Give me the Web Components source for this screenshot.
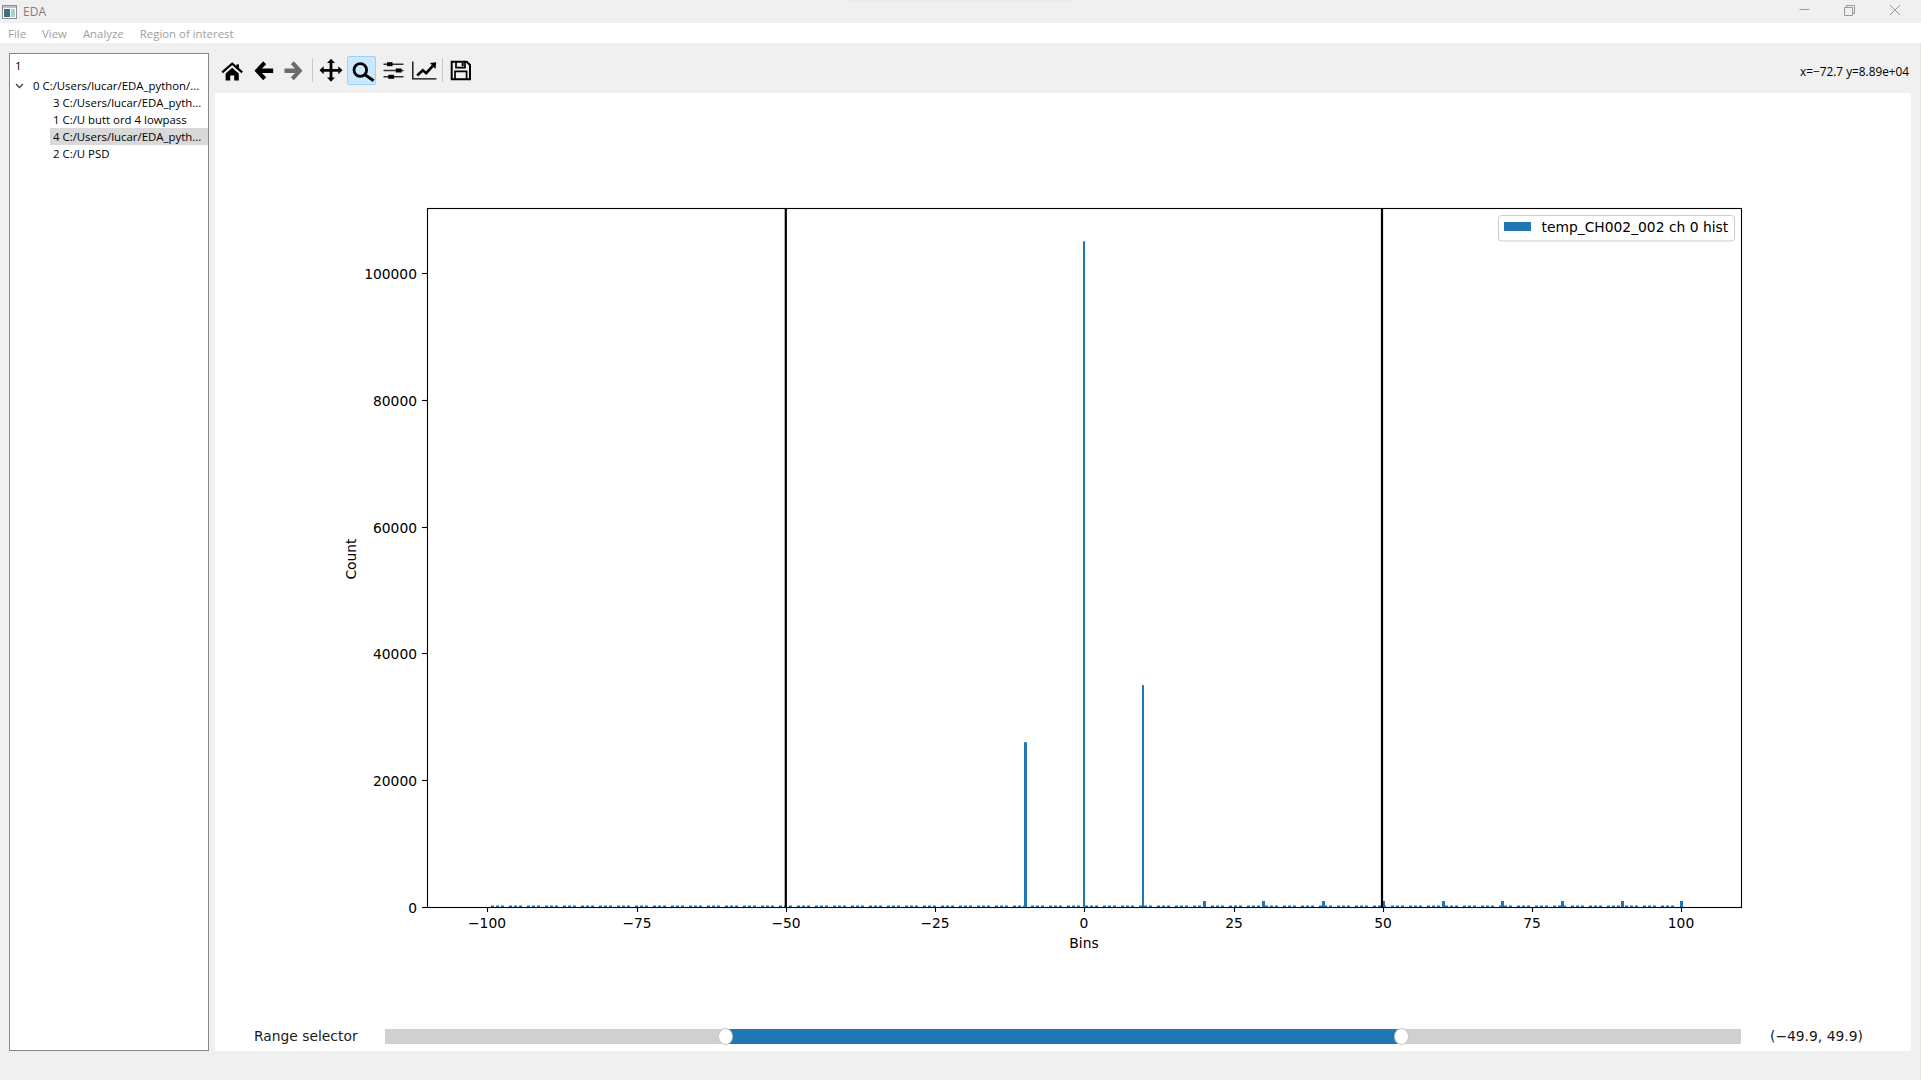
<!DOCTYPE html>
<html>
<head>
<meta charset="utf-8">
<title>EDA</title>
<style>
  html, body { margin: 0; height: 100%; background: #f0f0f0; overflow: hidden; }
  body { font-family: "Open Sans", "Liberation Sans", sans-serif; }
</style>
</head>
<body>
<eda-app>
  <eda-titlebar slot="title">EDA</eda-titlebar>
  <eda-menubar slot="menu">
    <span>File</span><span>View</span><span>Analyze</span><span>Region of interest</span>
  </eda-menubar>
  <eda-tree slot="tree">
    <eda-tree-item level="0">1</eda-tree-item>
    <eda-tree-item level="0" open>0 C:/Users/lucar/EDA_python/...</eda-tree-item>
    <eda-tree-item level="1">3 C:/Users/lucar/EDA_pyth...</eda-tree-item>
    <eda-tree-item level="1">1 C:/U butt ord 4 lowpass</eda-tree-item>
    <eda-tree-item level="1" selected>4 C:/Users/lucar/EDA_pyth...</eda-tree-item>
    <eda-tree-item level="1">2 C:/U PSD</eda-tree-item>
  </eda-tree>
  <eda-toolbar slot="toolbar" coords="x=−72.7 y=8.89e+04"></eda-toolbar>
  <eda-chart slot="chart"></eda-chart>
  <eda-range slot="range" label="Range selector" low="-49.9" high="49.9"></eda-range>
</eda-app>

<script>
const PLOT_FONT = `"DejaVu Sans", "Liberation Sans", sans-serif`;

class EdaApp extends HTMLElement {
  constructor() {
    super();
    this.attachShadow({ mode: 'open' });
    this.shadowRoot.innerHTML = `
      <style>
        :host { display: flex; flex-direction: column; width: 1921px; height: 1080px; background: #f0f0f0; box-shadow: inset -1px 0 #e3ebd8; }
        .main { display: flex; height: 998px; margin-top: 10px; padding-left: 9px; gap: 6px; }
        .right { display: flex; flex-direction: column; width: 1696px; }
        .canvas { display: flex; flex-direction: column; flex: 1; background: #fff; }
      </style>
      <slot name="title"></slot>
      <slot name="menu"></slot>
      <div class="main">
        <slot name="tree"></slot>
        <div class="right">
          <slot name="toolbar"></slot>
          <div class="canvas">
            <slot name="chart"></slot>
            <slot name="range"></slot>
          </div>
        </div>
      </div>
    `;
  }
}

class EdaTitlebar extends HTMLElement {
  constructor() {
    super();
    this.attachShadow({ mode: 'open' });
    this.shadowRoot.innerHTML = `
      <style>
        :host { display: flex; align-items: center; height: 23px; background: #f0f0f0; color: #7f7f7f; font: 12px "Open Sans", sans-serif; position: relative; }
        .icon { margin: 0 6px 0 2px; display: block; }
        .title { flex: 1; }
        .controls { display: flex; padding-right: 3px; }
        .controls svg { display: block; width: 46px; height: 23px; }
        .shade { position: absolute; top: 0; left: 850px; width: 222px; height: 3px; background: linear-gradient(#e8e8e8, #f0f0f0); }
      </style>
      <div class="shade"></div>
      <svg class="icon" width="15" height="14" viewBox="0 0 15 14">
        <rect x="0.5" y="0.5" width="14" height="13" fill="#fff" stroke="#8a8f96"/>
        <rect x="1" y="1" width="13" height="2" fill="#b9bfc6"/>
        <rect x="2" y="4" width="6" height="8" fill="#3f6f80"/>
        <rect x="9" y="4" width="4" height="8" fill="#a9d3c8"/>
      </svg>
      <span class="title"><slot></slot></span>
      <div class="controls">
        <svg viewBox="0 0 46 23"><path d="M19.5 9.5h10" stroke="#9a9a9a" fill="none"/></svg>
        <svg viewBox="0 0 46 23"><path d="M18.5 7.5h8v8h-8zM20.5 7.5v-2h8v8h-2" stroke="#9a9a9a" fill="none"/></svg>
        <svg viewBox="0 0 46 23"><path d="M18 5l10 10M28 5L18 15" stroke="#9a9a9a" fill="none"/></svg>
      </div>
    `;
  }
}

class EdaMenubar extends HTMLElement {
  constructor() {
    super();
    this.attachShadow({ mode: 'open' });
    this.shadowRoot.innerHTML = `
      <style>
        :host { display: flex; align-items: center; gap: 16px; height: 20px; padding-left: 8px; background: #fff; color: #a0a0a0; font: 11.4px "Open Sans", sans-serif; }
      </style>
      <slot></slot>
    `;
  }
}

class EdaTree extends HTMLElement {
  constructor() {
    super();
    this.attachShadow({ mode: 'open' });
    this.shadowRoot.innerHTML = `
      <style>
        :host { display: block; width: 200px; height: 998px; padding-top: 1px; box-sizing: border-box; background: #fff; border: 1px solid #828790; }
      </style>
      <slot></slot>
    `;
  }
}

class EdaTreeItem extends HTMLElement {
  constructor() {
    super();
    this.attachShadow({ mode: 'open' });
    this.shadowRoot.innerHTML = `
      <style>
        :host { display: flex; align-items: center; height: 17px; color: #000; font: 11.4px "Open Sans", sans-serif; white-space: nowrap; padding-left: 2px; }
        :host([level="1"]) { padding-left: 40px; }
        :host(:first-child) { height: 20px; }
        :host([open]) { padding-left: 20px; margin-top: 2px; position: relative; }
        .row { flex: 1; padding-left: 3px; line-height: 17px; }
        :host([selected]) .row { background: #d9d9d9; }
        .chev { display: none; position: absolute; left: 5px; top: 6px; }
        :host([open]) .chev { display: block; }
      </style>
      <svg class="chev" width="9" height="6" viewBox="0 0 9 6"><path d="M1 1l3.5 3.5L8 1" stroke="#404040" stroke-width="1.3" fill="none"/></svg>
      <div class="row"><slot></slot></div>
    `;
  }
}

// 24 unit boxes, the glyphs hang a little below the middle of the button
const ICONS = {
  home: '<path d="M2.2 12.4L12.2 3.6l10 8.8" stroke="#000" stroke-width="2.2" fill="none"/><rect x="16.4" y="4.4" width="2.6" height="4.4"/><path d="M5.6 13.6l6.6-5.8 6.6 5.8v6.9h-4.6v-5h-4v5H5.6z"/>',
  back: '<path d="M12.2 1.2L3.5 10.7l8.7 9.5 3-3-4.3-4.3h11.3V8.5H10.9l4.3-4.3z"/>',
  forward: '<path d="M11.8 1.2l8.7 9.5-8.7 9.5-3-3 4.3-4.3H2.5V8.5h10.6L8.8 4.2z" fill="#6a6a6a"/>',
  move: '<path transform="translate(0 -1.7)" d="M12 .5l4 4.2h-2.6v5.9h5.9V8l4.2 4-4.2 4v-2.6h-5.9v5.9H16l-4 4.2-4-4.2h2.6v-5.9H4.7V16L.5 12l4.2-4v2.6h5.9V4.7H8z"/>',
  zoom: '<circle cx="10.3" cy="10" r="6.3" fill="none" stroke="#000" stroke-width="2.8"/><path d="M15 14.8l8.6 6" stroke="#000" stroke-width="3" fill="none"/>',
  sliders: '<path d="M2.5 4.2h20M2.5 10.5h20M2.5 16.8h20" stroke="#333" stroke-width="1.4" fill="none"/><rect x="6" y="2.2" width="5.5" height="4"/><rect x="14.8" y="8.5" width="5.8" height="4"/><rect x="7.3" y="14.8" width="5.8" height="4"/>',
  chart: '<path d="M.8 1.5v17.3h23.6" stroke="#000" stroke-width="1.3" fill="none"/><path d="M5.2 15.5l5.6-5.3 3.4 3 6.6-7.4" stroke="#000" stroke-width="2.6" fill="none"/><path d="M24.2 2.2l-6.2.8 5.5 6z"/>',
  save: '<g transform="translate(-1 0)"><path d="M3.7 1.7h15l3.3 3.3v14.3H3.7z" fill="none" stroke="#000" stroke-width="2"/><path d="M8 2v5.6h9V2" fill="none" stroke="#000" stroke-width="1.7"/><path d="M7 19v-7.6h11.6V19" fill="none" stroke="#000" stroke-width="1.7"/><rect x="13.7" y="2.6" width="2" height="3.6"/></g>'
};

class EdaToolbar extends HTMLElement {
  constructor() {
    super();
    this.attachShadow({ mode: 'open' });
    const btn = (name, on) => `<div class="btn${on ? ' on' : ''}"><svg width="24" height="24" viewBox="0 -2 24 24">${ICONS[name]}</svg></div>`;
    this.shadowRoot.innerHTML = `
      <style>
        :host { display: flex; align-items: center; height: 40px; padding: 0 2px 6px 2px; box-sizing: border-box; flex: none; }
        .btn { display: flex; align-items: center; justify-content: center; width: 29px; height: 29px; margin-right: 2px; border: 1px solid transparent; box-sizing: border-box; border-radius: 2px; }
        .btn svg { overflow: visible; display: block; }
        .on { background: #cce8ff; border-color: #99d1ff; }
        .sep { width: 1px; height: 24px; background: #c8c8c8; margin: 0 3px 0 2px; }
        .coords { margin-left: auto; margin-top: 2px; font: 11.8px "Open Sans", sans-serif; color: #000; white-space: nowrap; }
      </style>
      ${btn('home')}${btn('back')}${btn('forward')}
      <div class="sep"></div>
      ${btn('move')}${btn('zoom', true)}${btn('sliders')}${btn('chart')}
      <div class="sep"></div>
      ${btn('save')}
      <span class="coords">${this.getAttribute('coords')}</span>
    `;
  }
}

// chart data coordinates to page pixels
const px = v => 1084.3 + v * 5.97;
const py = c => 907 - c * 0.00634;

class EdaChart extends HTMLElement {
  constructor() {
    super();
    this.attachShadow({ mode: 'open' });

    let ticks = '';
    [-100, -75, -50, -25, 0, 25, 50, 75, 100].forEach(v => {
      const x = Math.round(px(v)) + 0.5;
      const label = String(v).replace('-', '\u2212');
      ticks += `<path d="M${x} 907v5" stroke="#000" stroke-width="1.1"/>`;
      ticks += `<text x="${x - 0.5}" y="928" text-anchor="middle">${label}</text>`;
    });
    [0, 20000, 40000, 60000, 80000, 100000].forEach(c => {
      const y = Math.round(py(c)) + 0.5;
      ticks += `<path d="M422 ${y}h5" stroke="#000" stroke-width="1.1"/>`;
      ticks += `<text x="417" y="${y + 5}" text-anchor="end">${c}</text>`;
    });

    // tiny bins along the baseline, they come in threes
    let bars = '';
    let i = 0;
    for (let x = px(-100) + 4; x < px(100) - 3; x += [5, 5, 8][i++ % 3]) {
      bars += `<rect x="${Math.round(x)}" y="905.5" width="3" height="1.5"/>`;
    }
    [[1024, 26000, 3], [1083, 105000, 2], [1142, 35000, 2]].forEach(([x, c, w]) => {
      bars += `<rect x="${x}" y="${py(c).toFixed(1)}" width="${w}" height="${(907 - py(c)).toFixed(1)}"/>`;
    });
    [20, 30, 40, 50, 60, 70, 80, 90, 100].forEach(v => {
      bars += `<rect x="${Math.round(px(v)) - 1}" y="901" width="3" height="6"/>`;
    });

    this.shadowRoot.innerHTML = `
      <style>
        :host { display: block; height: 927px; }
        svg { display: block; }
        text { font-family: ${PLOT_FONT}; font-size: 13.85px; fill: #000; }
      </style>
      <svg width="1696" height="927" viewBox="215 93 1696 927">
        <g fill="#1f77b4">${bars}</g>
        <path d="M785.8 208v699M1382 208v699" stroke="#000" stroke-width="2.2" fill="none"/>
        <rect x="427.5" y="208.5" width="1314" height="699" fill="none" stroke="#000" stroke-width="1.1"/>
        ${ticks}
        <text x="1084" y="948" text-anchor="middle">Bins</text>
        <text transform="translate(356 559) rotate(-90)" text-anchor="middle">Count</text>
        <rect x="1498.5" y="215.5" width="236" height="25.5" rx="3" fill="#fff" stroke="#ccc"/>
        <rect x="1504" y="222" width="27" height="9" fill="#1f77b4"/>
        <text x="1541.5" y="232">temp_CH002_002 ch 0 hist</text>
      </svg>
    `;
  }
}

class EdaRange extends HTMLElement {
  constructor() {
    super();
    this.attachShadow({ mode: 'open' });
    const low = Number(this.getAttribute('low'));
    const high = Number(this.getAttribute('high'));
    const pct = v => ((v + 100) / 200 * 100).toFixed(2);
    this.shadowRoot.innerHTML = `
      <style>
        :host { display: flex; height: 31px; padding: 9px 0 7px 39px; box-sizing: border-box; font: 13.85px ${PLOT_FONT}; color: #1a1a1a; align-items: center; }
        .label { width: 131px; white-space: nowrap; padding-bottom: 2px; }
        .track { position: relative; width: 1356px; height: 15px; background: #d0d0d0; }
        .fill { position: absolute; top: 0; bottom: 0; background: #1f77b4; }
        .knob { position: absolute; top: -1px; width: 13px; height: 15px; margin-left: -7px; border-radius: 50%; background: #fff; border: 1px solid #c4c4c4; }
        .value { margin-left: 29px; white-space: nowrap; padding-bottom: 2px; }
      </style>
      <span class="label">${this.getAttribute('label')}</span>
      <div class="track">
        <div class="fill" style="left:${pct(low)}%; right:${(100 - pct(high)).toFixed(2)}%"></div>
        <div class="knob" style="left:${pct(low)}%"></div>
        <div class="knob" style="left:${pct(high)}%"></div>
      </div>
      <span class="value">(\u2212${Math.abs(low)}, ${high})</span>
    `;
  }
}

customElements.define('eda-app', EdaApp);
customElements.define('eda-titlebar', EdaTitlebar);
customElements.define('eda-menubar', EdaMenubar);
customElements.define('eda-tree', EdaTree);
customElements.define('eda-tree-item', EdaTreeItem);
customElements.define('eda-toolbar', EdaToolbar);
customElements.define('eda-chart', EdaChart);
customElements.define('eda-range', EdaRange);
</script>
</body>
</html>
